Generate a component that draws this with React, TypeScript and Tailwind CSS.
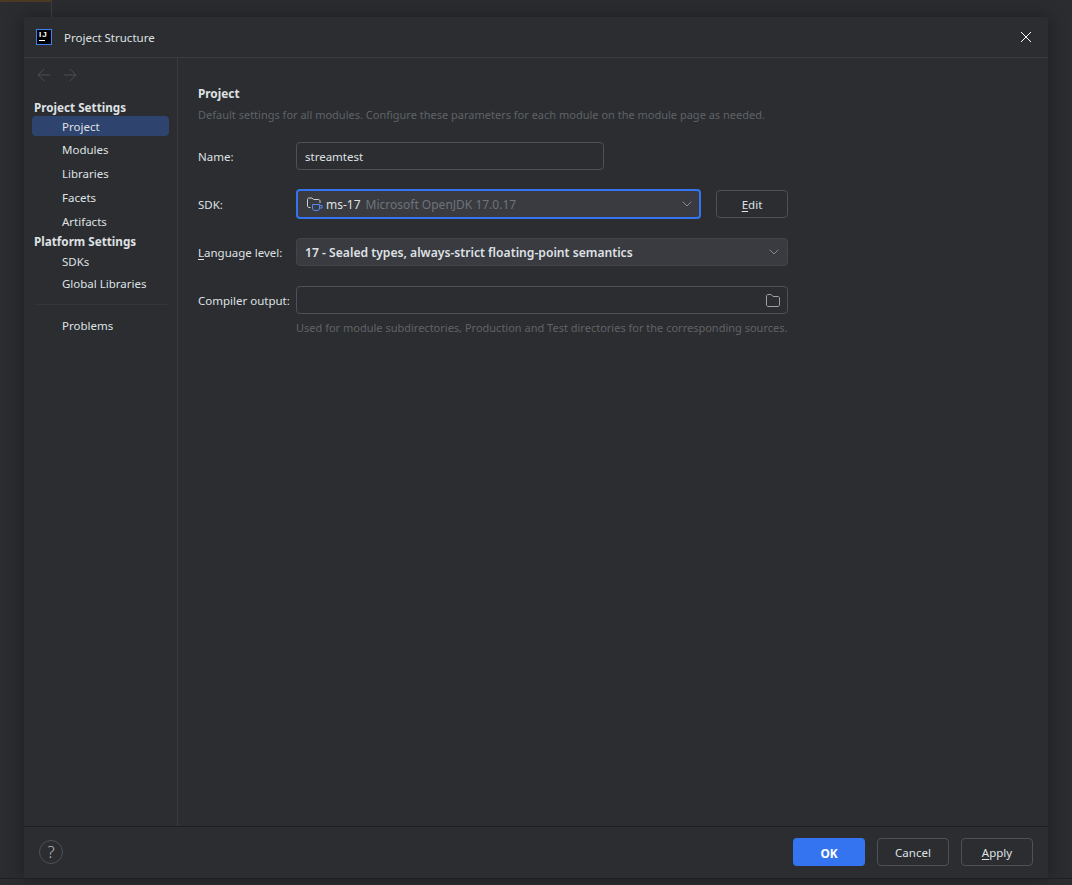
import { ArrowLeft, ArrowRight, ChevronDown } from "lucide-react";

function SideItem({ label, active, h = "h-6" }: { label: string; active?: boolean; h?: string }) {
  return (
    <div className={`${h} ml-[8px] flex w-[137px] items-center rounded pl-[30px] text-[#dfe1e5] ${active ? "bg-[#2e436e] pt-[2px]" : h === "h-6" ? "pt-px" : "pt-[2px]"}`}>
      {label}
    </div>
  );
}

function Label({ children, nudge = "pt-[2px]" }: { children: React.ReactNode; nudge?: string }) {
  return <div className={`w-[98px] shrink-0 whitespace-nowrap text-[#dfe1e5] ${nudge}`}>{children}</div>;
}

export default function App() {
  return (
    <div className="h-[885px] w-[1072px] overflow-hidden bg-[#2a2c2f] font-['Noto_Sans',sans-serif] text-[11.5px] leading-4">
      <div className="flex h-[17px]">
        <div className="w-[52px] border-r border-[#3a3c40]">
          <div className="h-[2px] bg-[#4a3a22]" />
        </div>
      </div>
      <div className="ml-[24px] flex h-[861px] w-[1024px] flex-col bg-[#2b2d30] shadow-[0_0_16px_rgba(0,0,0,0.35)]">
        <div className="flex h-[41px] shrink-0 items-center border-b border-[#393b40] pl-[12px] pr-[16px]">
          <div className="flex h-[16px] w-[16px] flex-col border border-[#3b82f6] bg-black pl-[2px] pt-[1px] font-['Liberation_Sans',sans-serif] text-[8px] font-bold leading-[7px] tracking-[1px] text-white">
            <span>IJ</span>
            <span className="mt-[2px] h-px w-[6px] bg-white" />
          </div>
          <span className="ml-[12px] flex-1 pt-px text-[#dfe1e5]">Project Structure</span>
          <svg width="12" height="12" viewBox="0 0 12 12" fill="none" stroke="#ffffff" strokeWidth="1">
            <path d="M1 1L11 11M11 1L1 11" />
          </svg>
        </div>

        <div className="flex min-h-0 flex-1">
          <div className="w-[154px] shrink-0 border-r border-[#393b40]">
            <div className="flex h-[34px] items-center gap-[6px] pl-[10px] text-[#4e5157]">
              <ArrowLeft className="h-[20px] w-[20px]" strokeWidth={1.1} />
              <ArrowRight className="h-[20px] w-[20px]" strokeWidth={1.1} />
            </div>
            <div className="mt-[7px] h-[17px] pl-[10px] text-[11.7px] font-bold text-[#dfe1e5]">Project Settings</div>
            <SideItem label="Project" active h="h-[20px]" />
            <div className="mt-px">
              <SideItem label="Modules" />
              <SideItem label="Libraries" />
              <SideItem label="Facets" />
              <SideItem label="Artifacts" />
            </div>
            <div className="h-[16px] pl-[10px] text-[11.7px] font-bold text-[#dfe1e5]">Platform Settings</div>
            <div className="mt-[1px]">
              <SideItem label="SDKs" h="h-[22px]" />
              <SideItem label="Global Libraries" h="h-[22px]" />
            </div>
            <div className="mx-[10px] mt-[10px] border-t border-[#33353a]" />
            <div className="mt-[8px]">
              <SideItem label="Problems" />
            </div>
          </div>

          <div className="flex-1 pl-[20px]">
            <div className="mt-[27px] text-[11.8px] font-bold text-[#dfe1e5]">Project</div>
            <div className="mt-[6px] text-[11px] text-[#5f6369]">
              Default settings for all modules. Configure these parameters for each module on the module page as needed.
            </div>

            <div className="mt-[19px] flex h-[28px] items-center">
              <Label>Name:</Label>
              <div className="flex h-[28px] w-[308px] items-center rounded border border-[#4e5157] pl-[8px] pt-px text-[#dfe1e5]">
                streamtest
              </div>
            </div>

            <div className="mt-[19px] flex h-[30px] items-center">
              <Label>SDK:</Label>
              <div className="flex h-[30px] w-[405px] items-center rounded border-2 border-[#3574f0] bg-[#393b40] pl-[9px] pr-[4px] text-[12px]">
                <svg width="16" height="16" viewBox="0 0 16 16" fill="none" className="shrink-0">
                  <path
                    d="M3.5 11.5H2C1.2 11.5 0.5 10.8 0.5 10V3.5C0.5 2.7 1.2 2 2 2H5L6.5 3.5H11.5C12.3 3.5 13 4.2 13 5V7"
                    stroke="#ced0d6"
                    strokeWidth="1"
                  />
                  <path d="M5.5 8.5H12.5V12C12.5 13.7 11.5 14.5 10 14.5H8C6.5 14.5 5.5 13.7 5.5 12V8.5Z" stroke="#548af7" strokeWidth="1" />
                  <path d="M12.5 9.5H15V12H12.5" stroke="#548af7" strokeWidth="1" />
                </svg>
                <span className="ml-[3px] pt-px text-[#dfe1e5]">ms-17</span>
                <span className="ml-[5px] flex-1 pt-px text-[#6f737a]">Microsoft OpenJDK 17.0.17</span>
                <ChevronDown className="h-[16px] w-[16px] text-[#9da0a8]" strokeWidth={1.2} />
              </div>
              <div className="ml-[15px] flex h-[28px] w-[72px] items-center justify-center rounded border border-[#4e5157] pt-px text-[#dfe1e5]">
                <span className="underline underline-offset-2">E</span>dit
              </div>
            </div>

            <div className="mt-[19px] flex h-[28px] items-center">
              <Label>
                <span className="underline underline-offset-2">L</span>anguage level:
              </Label>
              <div className="flex h-[28px] w-[492px] items-center rounded border border-[#43454a] bg-[#393b40] pl-[8px] pr-[5px] font-semibold text-[#dfe1e5]">
                <span className="flex-1 pt-[2px] text-[12.15px]">17 - Sealed types, always-strict floating-point semantics</span>
                <ChevronDown className="h-[16px] w-[16px] font-normal text-[#9da0a8]" strokeWidth={1.2} />
              </div>
            </div>

            <div className="mt-[20px] flex h-[28px] items-center">
              <Label nudge="pt-px">Compiler output:</Label>
              <div className="flex h-[28px] w-[492px] items-center justify-end rounded border border-[#4e5157] pr-[7px]">
                <svg width="14" height="13" viewBox="0 0 14 13" fill="none" stroke="#9da0a8" strokeWidth="1">
                  <path d="M2 0.5H5.2L7 2.5H12C12.8 2.5 13.5 3.2 13.5 4V11C13.5 11.8 12.8 12.5 12 12.5H2C1.2 12.5 0.5 11.8 0.5 11V2C0.5 1.2 1.2 0.5 2 0.5Z" />
                </svg>
              </div>
            </div>

            <div className="ml-[98px] mt-[6px] text-[11px] text-[#5f6369]">
              Used for module subdirectories, Production and Test directories for the corresponding sources.
            </div>
          </div>
        </div>

        <div className="flex h-[52px] shrink-0 items-start border-t border-[#1e1f22] pl-[15px] pr-[15px] pt-[11px]">
          <div className="mt-[2px] flex h-[24px] w-[24px] items-center justify-center rounded-full border border-[#4e5157] text-[17px] font-light text-[#b4b8bf]">
            ?
          </div>
          <div className="flex-1" />
          <div className="flex h-[28px] w-[72px] items-center justify-center rounded bg-[#3574f0] pt-px text-[11.8px] font-bold text-white">
            OK
          </div>
          <div className="ml-[12px] flex h-[28px] w-[72px] items-center justify-center rounded border border-[#4e5157] pt-[2px] text-[#dfe1e5]">
            Cancel
          </div>
          <div className="ml-[12px] flex h-[28px] w-[72px] items-center justify-center rounded border border-[#4e5157] pt-[2px] text-[#dfe1e5]">
            <span className="underline underline-offset-2">A</span>pply
          </div>
        </div>
      </div>
      <div className="h-px bg-[#1e1f22]" />
    </div>
  );
}
